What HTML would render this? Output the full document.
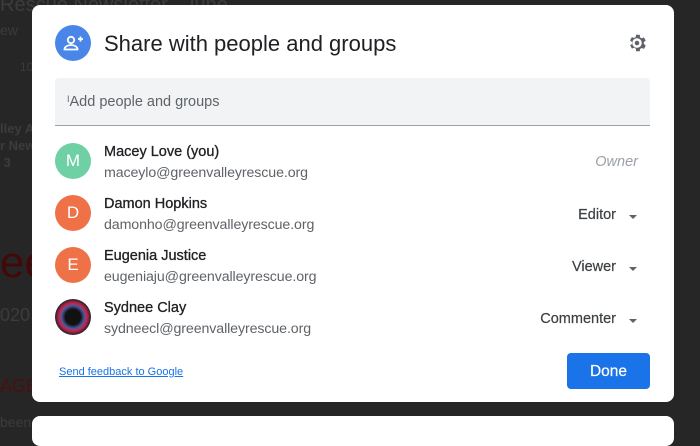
<!DOCTYPE html>
<html style="background:#262626"><head><style>
html,body{background:#262626}
body{margin:0;width:700px;height:430px;overflow:hidden;position:relative;font-family:"Liberation Sans",Arial,sans-serif}
.bg{position:absolute;color:#3c3c3c;font-size:14px}
.dlg{position:absolute;left:32px;top:5px;width:642px;height:397px;background:#fff;border-radius:8px}
.p2{position:absolute;left:32px;top:416px;width:642px;height:30px;background:#fff;border-radius:8px}
.abs{position:absolute}
.av{position:absolute;left:23px;width:36px;height:36px;border-radius:50%;color:#fff;font-size:17px;text-align:center;line-height:36px}
.nm{position:absolute;left:72px;font-size:14.5px;color:#202124;-webkit-text-stroke:0.3px #202124}
.em{position:absolute;left:72px;font-size:14.2px;color:#5f6368;letter-spacing:-0.1px}
.role{position:absolute;font-size:14.5px;color:#3c4043;text-align:right;-webkit-text-stroke:0.2px #3c4043}
.car{position:absolute;left:597px;width:0;height:0;border-left:4px solid transparent;border-right:4px solid transparent;border-top:4px solid #5f6368}
</style></head><body>
<div class="bg" style="left:0;top:-6px;font-size:20px">Rescue Newsletter &nbsp; June</div>
<div class="bg" style="left:0;top:22px">ew</div>
<div class="bg" style="left:20px;top:60px;font-size:12px">10</div>
<div class="bg" style="left:0;top:120px;font-size:13px;font-weight:bold;line-height:17px">lley A<br>r New<br>&nbsp;3</div>
<div class="bg" style="left:0;top:238px;font-size:44px;color:#440808">ee</div>
<div class="bg" style="left:0;top:305px;font-size:18px">020 V</div>
<div class="bg" style="left:0;top:376px;font-size:18px;color:#4a1010">AGE I</div>
<div class="bg" style="left:0;top:414px">been</div>
<div class="dlg">
 <div class="abs" style="left:23px;top:20px;width:36px;height:36px;border-radius:50%;background:#4a86e8">
  <svg width="36" height="36" viewBox="0 0 36 36"><circle cx="16" cy="15" r="3.2" fill="none" stroke="#fff" stroke-width="1.8"/><path d="M9.5 24.5c0-3 3.5-4.5 6.5-4.5s6.5 1.5 6.5 4.5z" fill="none" stroke="#fff" stroke-width="1.8"/><path d="M23 14h5M25.5 11.5v5" stroke="#fff" stroke-width="1.8"/></svg>
 </div>
 <div class="abs" style="left:72px;top:26px;font-size:22px;color:#202124">Share with people and groups</div>
 <svg class="abs" style="left:594px;top:27px" width="22" height="22" viewBox="0 0 24 24"><path fill="#5f6368" fill-rule="evenodd" d="M19.4 13a7.5 7.5 0 0 0 0-2l2.1-1.6-2-3.5-2.5 1a7.6 7.6 0 0 0-1.7-1L15 3h-4l-.4 2.6a7.6 7.6 0 0 0-1.7 1l-2.5-1-2 3.5L6.6 11a7.5 7.5 0 0 0 0 2l-2.1 1.6 2 3.5 2.5-1a7.6 7.6 0 0 0 1.7 1L11 21h4l.4-2.6a7.6 7.6 0 0 0 1.7-1l2.5 1 2-3.5zM12 6.8a5.2 5.2 0 1 1 0 10.4a5.2 5.2 0 1 1 0-10.4z"/><circle cx="12" cy="12" r="2.5" fill="#5f6368"/></svg>
 <div class="abs" style="left:23px;top:73px;width:595px;height:47px;background:#f1f3f4;border-radius:4px 4px 0 0;border-bottom:1.5px solid #9aa0a6"></div>
 <div class="abs" style="left:35px;top:89px;font-size:14.5px;color:#5f6368"><span style="font-size:9px;vertical-align:4px">I</span>Add people and groups</div>

 <div class="av" style="top:138px;background:#6fcfa5">M</div>
 <div class="nm" style="top:139px">Macey Love (you)</div>
 <div class="em" style="top:160px">maceylo@greenvalleyrescue.org</div>
 <div class="role" style="right:36px;top:149px;color:#9aa0a6;font-style:italic;-webkit-text-stroke:0">Owner</div>

 <div class="av" style="top:190px;background:#ee7148">D</div>
 <div class="nm" style="top:191px">Damon Hopkins</div>
 <div class="em" style="top:212px">damonho@greenvalleyrescue.org</div>
 <div class="role" style="right:58px;top:202px">Editor</div><div class="car" style="top:210px"></div>

 <div class="av" style="top:242px;background:#ee7148">E</div>
 <div class="nm" style="top:243px">Eugenia Justice</div>
 <div class="em" style="top:264px">eugeniaju@greenvalleyrescue.org</div>
 <div class="role" style="right:58px;top:254px">Viewer</div><div class="car" style="top:262px"></div>

 <div class="av" style="top:294px;background:radial-gradient(circle,#111 30%,#4a5aa0 45%,#c24 55%,#223 70%,#3a1010 100%)"></div>
 <div class="nm" style="top:295px">Sydnee Clay</div>
 <div class="em" style="top:316px">sydneecl@greenvalleyrescue.org</div>
 <div class="role" style="right:58px;top:306px">Commenter</div><div class="car" style="top:314px"></div>

 <div class="abs" style="left:27px;top:361px;font-size:11px;color:#1a73e8;text-decoration:underline">Send feedback to Google</div>
 <div class="abs" style="left:535px;top:348px;width:83px;height:36px;background:#1a73e8;border-radius:4px;color:#fff;font-size:15.5px;text-align:center;line-height:38px;-webkit-text-stroke:0.2px #fff">Done</div>
</div>
<div class="p2"></div>
</body></html>
